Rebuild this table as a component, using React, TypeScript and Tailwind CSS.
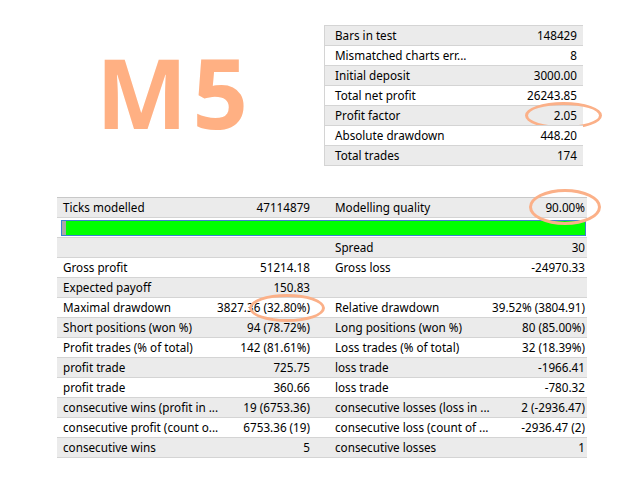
import type { ReactNode } from "react";

type Pair = [string, string];

const topRows: Pair[] = [
  ["Bars in test", "148429"],
  ["Mismatched charts err...", "8"],
  ["Initial deposit", "3000.00"],
  ["Total net profit", "26243.85"],
  ["Profit factor", "2.05"],
  ["Absolute drawdown", "448.20"],
  ["Total trades", "174"],
];

type Row = { l: Pair; r: Pair };

const bottomRows: Row[] = [
  { l: ["", ""], r: ["Spread", "30"] },
  { l: ["Gross profit", "51214.18"], r: ["Gross loss", "-24970.33"] },
  { l: ["Expected payoff", "150.83"], r: ["", ""] },
  { l: ["Maximal drawdown", "3827.36 (32.80%)"], r: ["Relative drawdown", "39.52% (3804.91)"] },
  { l: ["Short positions (won %)", "94 (78.72%)"], r: ["Long positions (won %)", "80 (85.00%)"] },
  { l: ["Profit trades (% of total)", "142 (81.61%)"], r: ["Loss trades (% of total)", "32 (18.39%)"] },
  { l: ["profit trade", "725.75"], r: ["loss trade", "-1966.41"] },
  { l: ["profit trade", "360.66"], r: ["loss trade", "-780.32"] },
  { l: ["consecutive wins (profit in ...", "19 (6753.36)"], r: ["consecutive losses (loss in ...", "2 (-2936.47)"] },
  { l: ["consecutive profit (count o...", "6753.36 (19)"], r: ["consecutive loss (count of ...", "-2936.47 (2)"] },
  { l: ["consecutive wins", "5"], r: ["consecutive losses", "1"] },
];

function Ring({ className }: { className: string }) {
  return (
    <span
      className={`pointer-events-none absolute rounded-[50%] border-[3px] border-[#fbb088] ${className}`}
    />
  );
}

function Cell({ label, value, className, ring }: { label: string; value: string; className: string; ring?: ReactNode }) {
  return (
    <div className={`relative flex items-center justify-between ${className}`}>
      <span>{label}</span>
      <span>{value}</span>
      {ring}
    </div>
  );
}

export default function App() {
  return (
    <div className="h-[480px] w-[640px] bg-white text-[11.7px] text-black [font-family:'Noto_Sans',sans-serif]">
      <div className="flex pt-[25px]">
        <div className="w-[324px] pl-[96px] pt-[22px]">
          <span className="block text-[97px] font-bold leading-[88px] tracking-[5px] text-[#ffb083] [font-family:'Open_Sans',sans-serif]">
            M5
          </span>
        </div>
        <div className="w-[259px] border-b border-l border-[#d4d4d4]">
          {topRows.map(([label, value], i) => (
            <Cell
              key={label}
              label={label}
              value={value}
              className={`h-[20px] border-t border-[#d4d4d4] pl-[10px] pr-[6px] ${i % 2 === 0 ? "bg-[#ebebeb]" : "bg-white"}`}
              ring={label === "Profit factor" ? <Ring className="left-[200px] top-[-4px] h-[27px] w-[77px]" /> : undefined}
            />
          ))}
        </div>
      </div>

      <div className="ml-[57px] mt-[31px] w-[530px] border-b border-[#d4d4d4]">
        <div className="flex h-[20px] border-t border-[#c8c8c8] bg-[#ebebeb]">
          <Cell label="Ticks modelled" value="47114879" className="w-[272px] pl-[6px] pr-[19px]" />
          <Cell
            label="Modelling quality"
            value="90.00%"
            className="flex-1 pl-[6px] pr-[2px]"
            ring={<Ring className="left-[200px] top-[-9px] h-[36px] w-[72px]" />}
          />
        </div>
        <div className="flex h-[20px] items-center border-t border-[#d4d4d4] bg-white pl-[4px] pr-[1px]">
          <div className="flex h-[16px] flex-1 border border-[#3c7fd0] bg-[#00ff00]">
            <div className="w-[4px] bg-[#a8a8a8]" />
          </div>
        </div>
        {bottomRows.map((row, i) => (
          <div
            key={i}
            className={`flex h-[20px] border-t border-[#d4d4d4] ${i % 2 === 0 ? "bg-[#ebebeb]" : "bg-white"}`}
          >
            <Cell
              label={row.l[0]}
              value={row.l[1]}
              className="w-[272px] pl-[6px] pr-[19px]"
              ring={i === 3 ? <Ring className="left-[192px] top-[-4px] h-[28px] w-[76px]" /> : undefined}
            />
            <Cell label={row.r[0]} value={row.r[1]} className="flex-1 pl-[6px] pr-[2px]" />
          </div>
        ))}
      </div>
    </div>
  );
}
